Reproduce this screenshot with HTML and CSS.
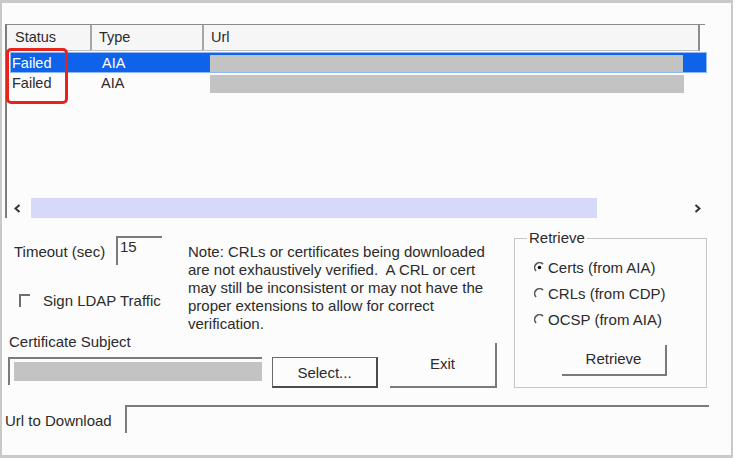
FILE: index.html
```html
<!DOCTYPE html>
<html>
<head>
<meta charset="utf-8">
<title>URL Retrieval Tool</title>
<link rel="stylesheet" href="styles.css">
</head>
<body>
<div class="window">
  <div class="list">
    <div class="list-header">
      <div class="hcell h-status">Status</div>
      <div class="hcell h-type">Type</div>
      <div class="hcell h-url">Url</div>
    </div>
    <div class="list-body">
      <div class="row selected">
        <div class="cell c-status">Failed</div>
        <div class="cell c-type">AIA</div>
        <div class="cell c-url"><span class="redact redact-row"></span></div>
      </div>
      <div class="row">
        <div class="cell c-status">Failed</div>
        <div class="cell c-type">AIA</div>
        <div class="cell c-url"><span class="redact redact-row"></span></div>
      </div>
    </div>
    <div class="hscroll">
      <svg class="arrow arrow-left" width="7" height="9" viewBox="0 0 7 9"><polyline points="5.5,1 1.5,4.5 5.5,8" fill="none" stroke="#333" stroke-width="2"/></svg>
      <div class="thumb"></div>
      <div class="scroll-space"></div>
      <svg class="arrow arrow-right" width="7" height="9" viewBox="0 0 7 9"><polyline points="1.5,1 5.5,4.5 1.5,8" fill="none" stroke="#333" stroke-width="2"/></svg>
    </div>
    <div class="highlight"></div>
  </div>

  <div class="bottom">
    <div class="left-area">
      <div class="top-row">
        <div class="col1">
          <div class="timeout">
            <span class="timeout-label">Timeout (sec)</span>
            <div class="field timeout-field">15</div>
          </div>
          <div class="check">
            <span class="checkbox"></span>
            <span class="check-label">Sign LDAP Traffic</span>
          </div>
        </div>
        <p class="note">Note: CRLs or certificates being downloaded<br>are not exhaustively verified.&nbsp; A CRL or cert<br>may still be inconsistent or may not have the<br>proper extensions to allow for correct<br>verification.</p>
      </div>
      <div class="bottom-row">
        <div class="subject">
          <div class="subject-label">Certificate Subject</div>
          <div class="subject-row">
            <div class="field subject-field"><span class="redact redact-subject"></span></div>
            <button class="btn btn-select">Select...</button>
          </div>
        </div>
        <button class="btn btn-flat btn-exit">Exit</button>
      </div>
    </div>

    <fieldset class="retrieve">
      <legend>Retrieve</legend>
      <div class="options">
        <div class="radio-row">
          <svg class="radio" width="11" height="11" viewBox="0 0 11 11"><path d="M2.1 9 A4.8 4.8 0 0 1 9 2.1" fill="none" stroke="#555" stroke-width="1.6"/><circle cx="5.5" cy="5.5" r="1.8" fill="#111"/></svg>
          <span>Certs (from AIA)</span>
        </div>
        <div class="radio-row">
          <svg class="radio" width="11" height="11" viewBox="0 0 11 11"><path d="M2.1 9 A4.8 4.8 0 0 1 9 2.1" fill="none" stroke="#555" stroke-width="1.6"/></svg>
          <span>CRLs (from CDP)</span>
        </div>
        <div class="radio-row">
          <svg class="radio" width="11" height="11" viewBox="0 0 11 11"><path d="M2.1 9 A4.8 4.8 0 0 1 9 2.1" fill="none" stroke="#555" stroke-width="1.6"/></svg>
          <span>OCSP (from AIA)</span>
        </div>
      </div>
      <button class="btn btn-flat btn-retrieve">Retrieve</button>
    </fieldset>
  </div>

  <div class="url-row">
    <span class="url-label">Url to Download</span>
    <div class="field url-field"></div>
  </div>
</div>
</body>
</html>
```

FILE: styles.css
```css
* {
  box-sizing: border-box;
}

html,
body {
  margin: 0;
  padding: 0;
  background: #ffffff;
}

body {
  font-family: "Liberation Sans", Arial, sans-serif;
  font-size: 15px;
  color: #2b2b2b;
}

.window {
  width: 733px;
  height: 458px;
  border: 2px solid #c9c9c9;
  border-top-width: 3px;
  border-bottom-width: 3px;
  background: #fcfcfc;
}

/* ---------- list view ---------- */
.list {
  position: relative;
  margin: 21px 0 0 3px;
  width: 700px;
  border-left: 2px solid #7d7d7d;
  border-top: 1px solid #8c8c8c;
}

.list-header {
  display: flex;
  width: 693px;
  height: 26px;
  background: #f6f6f6;
  border-right: 2px solid #8c8c8c;
  border-bottom: 1px solid #c0c0c0;
  font-size: 14.5px;
}

.hcell {
  line-height: 25px;
  padding-left: 8px;
}

.h-status {
  width: 85px;
  border-right: 2px solid #a6a6a6;
}

.h-type {
  width: 112px;
  padding-left: 7px;
  border-right: 2px solid #a6a6a6;
}

.h-url {
  flex: 1;
  padding-left: 7px;
}

.list-body {
  height: 147px;
  padding-top: 1px;
  font-size: 14.5px;
}

.row {
  display: flex;
  width: 697px;
  height: 21px;
  margin-left: 3px;
}

.row.selected {
  background: #0e63ea;
  color: #ffffff;
  border: 1px solid #8fb8f2;
}

.cell {
  line-height: 20px;
}

.c-status {
  width: 82px;
  padding-left: 2px;
}

.row.selected .c-status {
  padding-left: 1px;
}

.c-type {
  width: 112px;
  padding-left: 9px;
}

.c-url {
  flex: 1;
  padding-left: 6px;
}

.redact {
  display: block;
  background: #c3c3c3;
}

.redact-row {
  width: 474px;
  height: 18px;
  margin-top: 2px;
}

.row.selected .redact-row {
  width: 473px;
  margin-left: -1px;
  margin-top: 2px;
  height: 17px;
}

.hscroll {
  display: flex;
  align-items: center;
  height: 20px;
}

.arrow-left {
  margin-left: 7px;
}

.thumb {
  margin-left: 10px;
  width: 566px;
  height: 20px;
  background: #d6d9f7;
}

.scroll-space {
  flex: 1;
}

.arrow-right {
  margin-right: 4px;
}

.highlight {
  position: absolute;
  left: -1px;
  top: 23px;
  width: 62px;
  height: 56px;
  border: 3px solid #e5241c;
  border-radius: 5px;
}

/* ---------- lower controls ---------- */
.bottom {
  display: flex;
  padding-left: 6px;
}

.left-area {
  width: 497px;
}

.top-row {
  display: flex;
  height: 115px;
}

.col1 {
  width: 180px;
}

.timeout {
  display: flex;
  margin-top: 18px;
  height: 29px;
}

.timeout-label {
  width: 108px;
  padding-left: 6px;
  margin-top: 8px;
  line-height: 16px;
}

.field {
  background: #ffffff;
  border-top: 2px solid #7b7b7b;
  border-left: 2px solid #7b7b7b;
}

.timeout-field {
  width: 46px;
  height: 29px;
  padding: 1px 0 0 2px;
  line-height: 16px;
  background: transparent;
}

.check {
  display: flex;
  align-items: center;
  margin-top: 26px;
  height: 18px;
}

.checkbox {
  margin-left: 11px;
  width: 11px;
  height: 13px;
  border-top: 2px solid #6e6e6e;
  border-left: 2px solid #6e6e6e;
}

.check-label {
  margin-left: 13px;
}

.note {
  margin: 0;
  padding-top: 25px;
  line-height: 18px;
  white-space: nowrap;
}

.bottom-row {
  display: flex;
  align-items: flex-end;
  height: 55px;
}

.subject-label {
  margin: 1px 0 7px 1px;
  line-height: 16px;
}

.subject-row {
  display: flex;
  gap: 10px;
}

.subject-field {
  width: 254px;
  height: 28px;
  padding: 3px 0 0 4px;
  background: transparent;
}

.redact-subject {
  width: 248px;
  height: 19px;
}

.btn {
  font-family: inherit;
  font-size: 15px;
  color: #2b2b2b;
  padding: 0;
  margin: 0;
  cursor: default;
}

.btn-select {
  width: 106px;
  height: 31px;
  background: #fcfcfc;
  border: 1px solid #6a6a6a;
  border-right: 2px solid #4c4c4c;
  border-bottom: 2px solid #4c4c4c;
}

.btn-flat {
  background: transparent;
  border: none;
  border-right: 2px solid #7a7a7a;
  border-bottom: 2px solid #7a7a7a;
}

.btn-exit {
  margin-left: 12px;
  width: 107px;
  height: 45px;
  padding-bottom: 3px;
}

/* ---------- retrieve group ---------- */
.retrieve {
  margin: 12px 0 0 9px;
  width: 193px;
  min-width: 0;
  padding: 8px 0 10px 12px;
  border: 1px solid #c6c6c6;
}

.retrieve legend {
  padding: 0 2px;
  line-height: 16px;
}

.options {
  margin-left: 7px;
}

.radio-row {
  display: flex;
  align-items: center;
  height: 26px;
}

.radio {
  margin-right: 3px;
}

.btn-retrieve {
  display: block;
  margin: 13px 0 0 35px;
  width: 105px;
  height: 31px;
  padding-bottom: 2px;
}

/* ---------- url row ---------- */
.url-row {
  display: flex;
  margin-top: 17px;
  height: 28px;
}

.url-label {
  width: 120px;
  margin-left: 3px;
  padding-top: 8px;
  line-height: 16px;
}

.url-field {
  width: 584px;
  height: 28px;
  background: transparent;
}
```
